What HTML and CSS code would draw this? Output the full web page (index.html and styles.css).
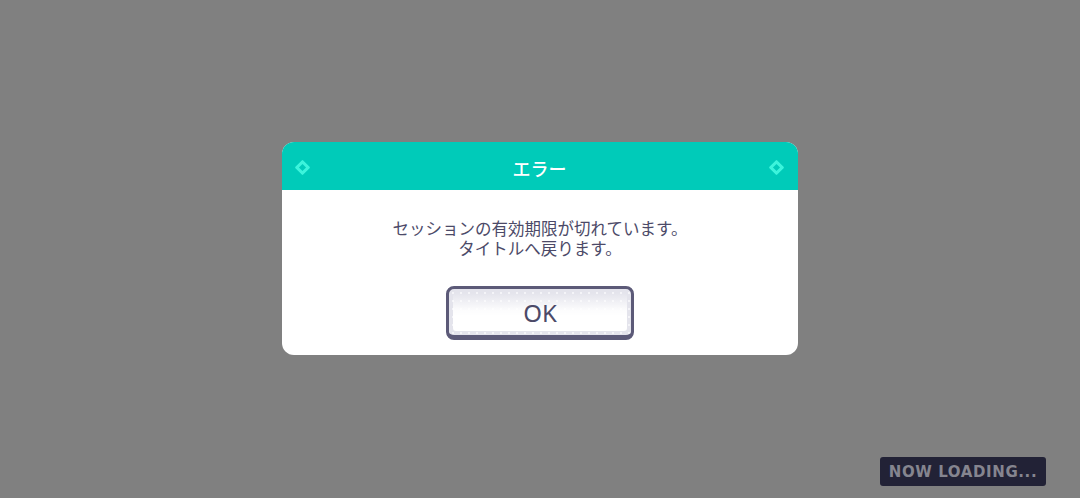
FILE: index.html
```html
<!DOCTYPE html>
<html lang="ja">
<head>
  <meta charset="UTF-8" />
  <meta name="viewport" content="width=device-width, initial-scale=1.0"/>
  <title>エラー</title>
  <link rel="stylesheet" href="styles.css">
</head>
<body>

  <div class="screen">
    <div class="dialog">
      <div class="dialog-head">
        <span class="gem"></span>
        <h1>エラー</h1>
        <span class="gem"></span>
      </div>
      <div class="dialog-body">
        <p>セッションの有効期限が切れています。<br>タイトルへ戻ります。</p>
        <button class="ok-btn"><span>OK</span></button>
      </div>
    </div>

    <div class="loading">NOW LOADING...</div>
  </div>

</body>
</html>
```

FILE: styles.css
```css
:root {
  --mint: #00cbb9;
  --gem: #3cf4dc;
  --ink: #4c4a68;
  --frame: #5c5a78;
  --backdrop: #808080;
}

body {
  margin: 0;
  padding: 0;
  background-color: var(--backdrop);
  font-family: "Noto Sans CJK JP", "Noto Sans", sans-serif;
}

.screen {
  position: relative;
  width: 1080px;
  height: 498px;
  display: flex;
  justify-content: center;
  padding-top: 142px;
  box-sizing: border-box;
}

.dialog {
  width: 516px;
  height: 213px;
  background: white;
  border-radius: 12px;
  overflow: hidden;
}

.dialog-head {
  height: 48px;
  background-color: var(--mint);
  display: flex;
  align-items: center;
  justify-content: space-between;
  padding: 0 16px 0 15px;
}

.dialog-head h1 {
  margin: 0;
  color: white;
  font-size: 18px;
  font-weight: 500;
  padding-top: 4px;
}

.gem {
  width: 5px;
  height: 5px;
  border: 3px solid var(--gem);
  border-radius: 1px;
  transform: rotate(45deg);
  margin-top: 3px;
}

.dialog-body {
  display: flex;
  flex-direction: column;
  align-items: center;
}

.dialog-body p {
  margin: 28px 0 0;
  color: var(--ink);
  font-size: 16.5px;
  line-height: 20px;
  text-align: center;
}

.ok-btn {
  margin-top: 28px;
  width: 188px;
  height: 54px;
  padding: 4px;
  border: 3px solid var(--frame);
  border-bottom-width: 5px;
  border-radius: 8px;
  background-color: #e4e4ec;
  background-image: radial-gradient(circle, #f4f4f8 1px, transparent 1.5px);
  background-size: 8px 8px;
  font-family: "Noto Sans", sans-serif;
  cursor: pointer;
}

.ok-btn span {
  display: flex;
  align-items: center;
  justify-content: center;
  height: 100%;
  background: linear-gradient(to bottom, rgba(255,255,255,0) 0, rgba(255,255,255,0.9) 45%, white 60%);
  border-radius: 3px;
  color: var(--ink);
  font-size: 24px;
}

.loading {
  position: absolute;
  right: 34px;
  bottom: 12px;
  width: 166px;
  height: 29px;
  background: #222236;
  border-radius: 3px;
  color: #85858f;
  font-family: "DejaVu Sans", sans-serif;
  font-weight: bold;
  font-size: 15px;
  letter-spacing: 0.6px;
  display: flex;
  align-items: center;
  justify-content: center;
}
```
